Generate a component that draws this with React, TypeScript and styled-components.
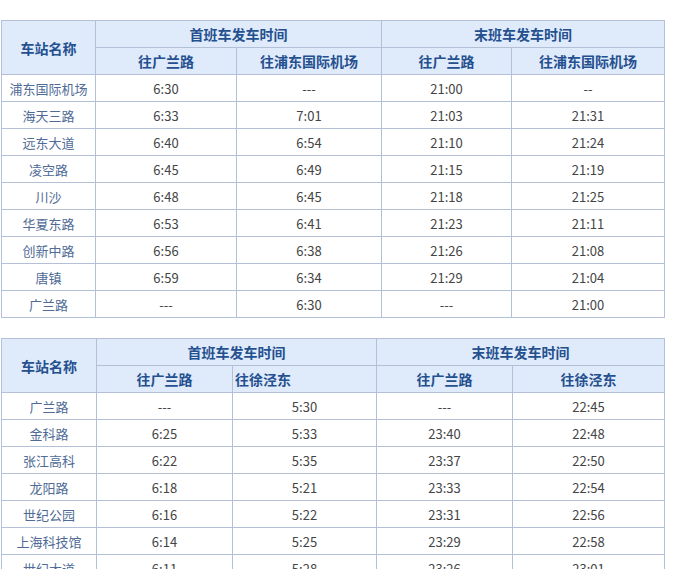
import React from "react";
import styled, { createGlobalStyle } from "styled-components";

const GlobalStyle = createGlobalStyle`
  body {
    margin: 0;
    background: #ffffff;
    font-family: "Noto Sans CJK SC", "Open Sans", sans-serif;
  }
`;

interface Row {
  station: string;
  first: [string, string];
  last: [string, string];
}

interface Schedule {
  dirA: string;
  dirB: string;
  widths: number[];
  leftB?: boolean;
  rows: Row[];
}

const Page = styled.div`
  padding: 20px 0 0 1px;
  display: flex;
  flex-direction: column;
  gap: 20px;
`;

const Table = styled.table`
  width: 663px;
  border-collapse: collapse;
  table-layout: fixed;
  font-size: 13px;
`;

const Th = styled.th<{ $left?: boolean }>`
  height: 26px;
  padding: 0 2px;
  background-color: #dfebfb;
  border: 1px solid #b3c0d8;
  color: #25508f;
  font-weight: 700;
  font-size: 14px;
  text-align: ${(p) => (p.$left ? "left" : "center")};
  white-space: nowrap;
`;

const Td = styled.td<{ $station?: boolean }>`
  height: 26px;
  padding: 0;
  border: 1px solid #b3c0d8;
  text-align: center;
  color: ${(p) => (p.$station ? "#4f6b96" : "#444444")};
  white-space: nowrap;
`;

const schedules: Schedule[] = [
  {
    dirA: "往广兰路",
    dirB: "往浦东国际机场",
    widths: [94, 141, 145, 130, 153],
    rows: [
      { station: "浦东国际机场", first: ["6:30", "---"], last: ["21:00", "--"] },
      { station: "海天三路", first: ["6:33", "7:01"], last: ["21:03", "21:31"] },
      { station: "远东大道", first: ["6:40", "6:54"], last: ["21:10", "21:24"] },
      { station: "凌空路", first: ["6:45", "6:49"], last: ["21:15", "21:19"] },
      { station: "川沙", first: ["6:48", "6:45"], last: ["21:18", "21:25"] },
      { station: "华夏东路", first: ["6:53", "6:41"], last: ["21:23", "21:11"] },
      { station: "创新中路", first: ["6:56", "6:38"], last: ["21:26", "21:08"] },
      { station: "唐镇", first: ["6:59", "6:34"], last: ["21:29", "21:04"] },
      { station: "广兰路", first: ["---", "6:30"], last: ["---", "21:00"] },
    ],
  },
  {
    dirA: "往广兰路",
    dirB: "往徐泾东",
    widths: [95, 136, 144, 136, 152],
    leftB: true,
    rows: [
      { station: "广兰路", first: ["---", "5:30"], last: ["---", "22:45"] },
      { station: "金科路", first: ["6:25", "5:33"], last: ["23:40", "22:48"] },
      { station: "张江高科", first: ["6:22", "5:35"], last: ["23:37", "22:50"] },
      { station: "龙阳路", first: ["6:18", "5:21"], last: ["23:33", "22:54"] },
      { station: "世纪公园", first: ["6:16", "5:22"], last: ["23:31", "22:56"] },
      { station: "上海科技馆", first: ["6:14", "5:25"], last: ["23:29", "22:58"] },
      { station: "世纪大道", first: ["6:11", "5:28"], last: ["23:26", "23:01"] },
    ],
  },
];

const TimeTable: React.FC<{ data: Schedule }> = ({ data }) => (
  <Table>
    <colgroup>
      {data.widths.map((w, i) => (
        <col key={i} style={{ width: w }} />
      ))}
    </colgroup>
    <thead>
      <tr>
        <Th rowSpan={2}>车站名称</Th>
        <Th colSpan={2}>首班车发车时间</Th>
        <Th colSpan={2}>末班车发车时间</Th>
      </tr>
      <tr>
        <Th>{data.dirA}</Th>
        <Th $left={data.leftB}>{data.dirB}</Th>
        <Th>{data.dirA}</Th>
        <Th>{data.dirB}</Th>
      </tr>
    </thead>
    <tbody>
      {data.rows.map((r) => (
        <tr key={r.station}>
          <Td $station>{r.station}</Td>
          <Td>{r.first[0]}</Td>
          <Td>{r.first[1]}</Td>
          <Td>{r.last[0]}</Td>
          <Td>{r.last[1]}</Td>
        </tr>
      ))}
    </tbody>
  </Table>
);

const App: React.FC = () => (
  <>
    <GlobalStyle />
    <Page>
      {schedules.map((s, i) => (
        <TimeTable key={i} data={s} />
      ))}
    </Page>
  </>
);

export default App;
